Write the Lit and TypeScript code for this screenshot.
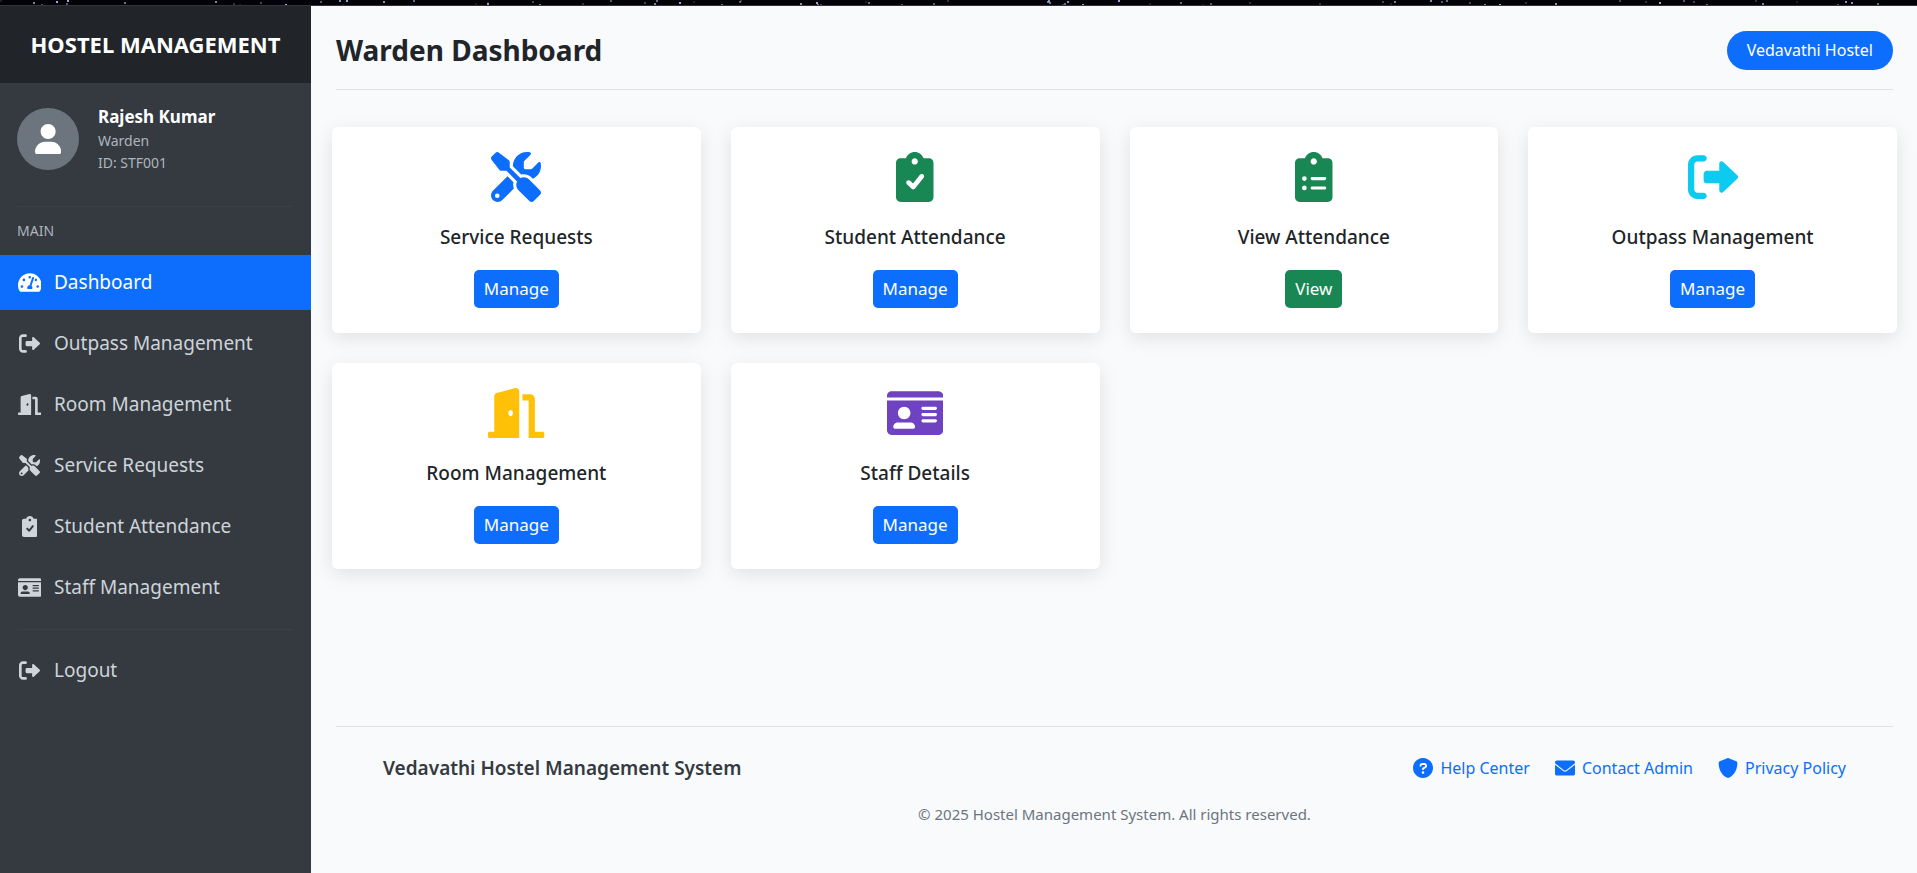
import { LitElement, html, css, svg } from "lit";
import { customElement, property } from "lit/decorators.js";

type Icon = { w: number; d: string };

const BOARD =
  "M336 64h-53.9C268.9 26.8 233.7 0 192 0S115.1 26.8 101.9 64H48C21.5 64 0 85.5 0 112v352c0 26.5 21.5 48 48 48h288c26.5 0 48-21.5 48-48V112C384 85.5 362.5 64 336 64zM192 64c17.7 0 32 14.3 32 32s-14.3 32-32 32s-32-14.3-32-32S174.3 64 192 64z";

const ICONS: Record<string, Icon> = {
  tools: {
    w: 512,
    d: "M78.6 5C69.1-2.4 55.6-1.5 47 7L7 47c-8.5 8.5-9.4 22-2.1 31.6l80 104c4.5 5.9 11.6 9.4 19 9.4h54.1l109 109c-14.7 29-10 65.4 14.3 89.6l112 112c12.5 12.5 32.8 12.5 45.3 0l64-64c12.5-12.5 12.5-32.8 0-45.3l-112-112c-24.2-24.2-60.6-29-89.6-14.3l-109-109V104c0-7.5-3.5-14.5-9.4-19L78.6 5zM19.9 396.1C7.2 408.8 0 426.1 0 444.1C0 481.6 30.4 512 67.9 512c18 0 35.3-7.2 48-19.9L233.7 374.3c-7.8-20.9-9-43.6-3.6-65.1l-61.7-61.7L19.9 396.1zM512 144c0-10.5-1.1-20.7-3.2-30.5c-2.4-11.2-16.1-14.1-24.2-6l-63.9 63.9c-3 3-7.1 4.7-11.3 4.7H352c-8.8 0-16-7.2-16-16V102.6c0-4.2 1.7-8.3 4.7-11.3l63.9-63.9c8.1-8.1 5.2-21.8-6-24.2C388.7 1.1 378.5 0 368 0C288.5 0 224 64.5 224 144l0 .8 85.3 85.3c36-9.1 75.8 .5 104 28.7L429 274.5c49-23 83-72.8 83-130.5zM40 448a24 24 0 1 1 48 0 24 24 0 1 1 -48 0z",
  },
  check: {
    w: 384,
    d:
      BOARD +
      "M282.9 262.8l-88 112c-4.1 5.2-10.2 8.8-16.9 9.1c-6.9 .2-13.4-2.3-18-6.9l-48-48c-9.4-9.4-9.4-24.6 0-33.9s24.6-9.4 33.9 0l28.7 28.7l70.6-90.2c8.2-10.4 23.3-12.2 33.7-4C289.3 237.3 291.1 252.3 282.9 262.8z",
  },
  list: {
    w: 384,
    d:
      BOARD +
      "M72 272a24 24 0 1 1 48 0a24 24 0 1 1-48 0zM72 368a24 24 0 1 1 48 0a24 24 0 1 1-48 0zM176 256h128c8.8 0 16 7.2 16 16s-7.2 16-16 16H176c-8.8 0-16-7.2-16-16s7.2-16 16-16zM176 352h128c8.8 0 16 7.2 16 16s-7.2 16-16 16H176c-8.8 0-16-7.2-16-16s7.2-16 16-16z",
  },
  exit: {
    w: 512,
    d: "M96 480h64c17.7 0 32-14.3 32-32s-14.3-32-32-32H96c-17.7 0-32-14.3-32-32V128c0-17.7 14.3-32 32-32h64c17.7 0 32-14.3 32-32s-14.3-32-32-32H96C43 32 0 75 0 128v256C0 437 43 480 96 480zM504.8 238.5l-144.1-136c-7-6.6-17.2-8.4-26-4.6c-8.8 3.8-14.5 12.5-14.5 22.1l-.1 72h-128c-17.7 0-32 14.3-32 32v64c0 17.7 14.3 32 32 32h128l.1 72c0 9.6 5.7 18.3 14.5 22.1c8.8 3.8 19 2 26-4.6l144.1-136C514.4 264.4 514.4 247.6 504.8 238.5z",
  },
  door: {
    w: 576,
    d: "M560 448H480V113.5c0-27.3-21.5-49.5-48-49.5H352v64h64V512h144c8.9 0 16-7.1 16-16v-32C576 455.1 568.9 448 560 448zM280.3 1l-192 49.8C73.1 54.5 64 67.8 64 82.9V448H16c-8.9 0-16 7.1-16 16v32c0 8.9 7.1 16 16 16H320V33.1C320 11.6 300.5-4.2 280.3 1zM232 288c-13.3 0-24-14.4-24-32s10.7-32 24-32s24 14.4 24 32S245.3 288 232 288z",
  },
  card: {
    w: 576,
    d: "M528 32H48C21.5 32 0 53.5 0 80V96h576V80C576 53.5 554.5 32 528 32zM0 432c0 26.5 21.5 48 48 48h480c26.5 0 48-21.5 48-48V128H0V432zM368 192h128c8.8 0 16 7.2 16 16s-7.2 16-16 16H368c-8.8 0-16-7.2-16-16s7.2-16 16-16zM368 256h128c8.8 0 16 7.2 16 16s-7.2 16-16 16H368c-8.8 0-16-7.2-16-16s7.2-16 16-16zM368 320h128c8.8 0 16 7.2 16 16s-7.2 16-16 16H368c-8.8 0-16-7.2-16-16s7.2-16 16-16zM176 192c35.4 0 64 28.7 64 64s-28.6 64-64 64s-64-28.7-64-64S140.7 192 176 192zM112 352h128c26.5 0 48 21.5 48 48c0 8.8-7.2 16-16 16H80c-8.8 0-16-7.2-16-16C64 373.5 85.5 352 112 352z",
  },
  gauge: {
    w: 576,
    d: "M288 32C128.94 32 0 160.94 0 320c0 52.8 14.25 102.26 39.06 144.8 5.61 9.62 16.3 15.2 27.44 15.2h443c11.14 0 21.83-5.58 27.44-15.2C561.75 422.26 576 372.8 576 320c0-159.06-128.94-288-288-288zm0 64c14.71 0 26.58 10.13 30.32 23.65-1.11 2.26-2.64 4.23-3.45 6.67l-9.22 27.67c-5.13 3.49-10.97 6.01-17.64 6.01-17.67 0-32-14.33-32-32S270.33 96 288 96zM96 384c-17.67 0-32-14.33-32-32s14.33-32 32-32 32 14.33 32 32-14.33 32-32 32zm48-160c-17.67 0-32-14.33-32-32s14.33-32 32-32 32 14.33 32 32-14.33 32-32 32zm246.77-72.41l-61.33 184C343.13 347.33 352 364.54 352 384c0 11.72-3.38 22.55-8.88 32H232.88c-5.5-9.45-8.88-20.28-8.88-32 0-33.94 26.5-61.43 59.9-63.59l61.34-184.01c4.17-12.56 17.73-19.45 30.36-15.17 12.57 4.19 19.35 17.79 15.17 30.36zm14.66 57.2l15.52-46.55c3.47-1.29 7.13-2.23 11.05-2.23 17.67 0 32 14.33 32 32s-14.33 32-32 32c-11.38-.01-20.89-6.28-26.57-15.22zM480 384c-17.67 0-32-14.33-32-32s14.33-32 32-32 32 14.33 32 32-14.33 32-32 32z",
  },
  user: {
    w: 448,
    d: "M224 256c70.7 0 128-57.3 128-128S294.7 0 224 0S96 57.3 96 128s57.3 128 128 128zm50.7 48H173.3C77.6 304 0 381.6 0 477.3C0 496.5 15.5 512 34.7 512h378.6c19.1 0 34.7-15.5 34.7-34.7C448 381.6 370.4 304 274.7 304z",
  },
  help: {
    w: 512,
    d: "M256 0C114.6 0 0 114.6 0 256s114.6 256 256 256s256-114.6 256-256S397.4 0 256 0zM256 400c-18 0-32-14-32-32s13.1-32 32-32c17.1 0 32 14 32 32S273.1 400 256 400zM325.1 258L280 286V288c0 13-11 24-24 24S232 301 232 288V272c0-8 4-16 12-21l57-34C308 213 312 206 312 198C312 186 301.1 176 289.1 176h-51.1C225.1 176 216 186 216 198c0 13-11 24-24 24s-24-11-24-24C168 159 199 128 237.1 128h51.1C329 128 360 159 360 198C360 222 347 245 325.1 258z",
  },
  mail: {
    w: 512,
    d: "M256 352c-16.5 0-33.1-5.4-47.2-16.4L0 173.2V400C0 426.5 21.5 448 48 448h416c26.5 0 48-21.5 48-48V173.2L303.2 335.6C289.1 346.6 272.5 352 256 352zM16.3 145.3l212.2 165.1c16.2 12.6 38.9 12.6 55.1 0l212.2-165.1C505.1 137.3 512 125 512 112C512 85.5 490.5 64 464 64H48C21.5 64 0 85.5 0 112C0 125 6 137.3 16.3 145.3z",
  },
  shield: {
    w: 512,
    d: "M466.5 83.7l-192-80c-11.8-4.9-25.1-4.9-36.9 0l-192 80C27.7 91.1 16 108.6 16 128c0 198.5 114.5 335.7 221.5 380.3 11.8 4.9 25.1 4.9 36.9 0C360.1 472.6 496 349.3 496 128c0-19.4-11.7-36.9-29.5-44.3z",
  },
};

@customElement("hm-icon")
class HmIcon extends LitElement {
  @property() name = "user";

  static styles = css`
    :host {
      display: inline-flex;
      justify-content: center;
    }
    .glyph {
      display: block;
      height: 1em;
      width: auto;
      fill: currentColor;
      fill-rule: evenodd;
    }
  `;

  render() {
    const icon = ICONS[this.name];
    return html`<svg class="glyph" viewBox="0 0 ${icon.w} 512" aria-hidden="true">
      ${svg`<path d=${icon.d}></path>`}
    </svg>`;
  }
}

const STARS = Array.from({ length: 80 }, (_, i) => ({
  x: (i * 617 + ((i * i * 37) % 211)) % 1917,
  y: (i * 7 + (i % 3)) % 5,
  o: 0.15 + ((i * 13) % 8) / 10,
}));

@customElement("hm-starfield")
class HmStarfield extends LitElement {
  static styles = css`
    :host {
      display: block;
      height: 5px;
      overflow: hidden;
      background: #030208;
      border-bottom: 1px solid #3a3138;
    }
    .sky {
      display: block;
      width: 100%;
      height: 5px;
      fill: #b9c6ee;
    }
  `;

  render() {
    return html`<svg class="sky" viewBox="0 0 1917 5" preserveAspectRatio="none" aria-hidden="true">
      ${STARS.map(
        (s) => svg`<rect x=${s.x} y=${s.y} width="2" height="2" opacity=${s.o}></rect>`,
      )}
    </svg>`;
  }
}

const NAV = [
  { icon: "gauge", label: "Dashboard", active: true },
  { icon: "exit", label: "Outpass Management" },
  { icon: "door", label: "Room Management" },
  { icon: "tools", label: "Service Requests" },
  { icon: "check", label: "Student Attendance" },
  { icon: "card", label: "Staff Management" },
];

@customElement("hm-sidebar")
class HmSidebar extends LitElement {
  static styles = css`
    :host {
      display: block;
      width: 311px;
      flex: none;
      background: #343a40;
      color: #ced4da;
    }
    .brand {
      padding: 26px 16px;
      background: #212529;
      color: #fff;
      font-size: 22px;
      line-height: 25px;
      font-weight: 700;
      text-align: center;
      white-space: nowrap;
    }
    .profile {
      display: flex;
      align-items: center;
      gap: 19px;
      padding: 20px 17px 32px;
    }
    .avatar {
      display: flex;
      align-items: center;
      justify-content: center;
      width: 62px;
      height: 62px;
      border-radius: 50%;
      background: #6c757d;
      color: #fff;
      font-size: 30px;
    }
    .name {
      color: #fff;
      font-size: 17px;
      line-height: 27px;
      font-weight: 700;
    }
    .meta {
      color: #adb5bd;
      font-size: 14px;
      line-height: 22px;
    }
    .rule {
      height: 1px;
      margin: 0 19px 0 17px;
      border: 0;
      background: #3b4148;
    }
    .section {
      margin: 0;
      padding: 13px 17px;
      color: #adb5bd;
      font-size: 14px;
      line-height: 22px;
      font-weight: 400;
    }
    .list {
      display: flex;
      flex-direction: column;
      gap: 6px;
      margin: 0;
      padding: 0;
      list-style: none;
    }
    .link {
      display: flex;
      align-items: center;
      gap: 12px;
      height: 55px;
      padding: 0 17px;
      color: inherit;
      font-size: 19px;
      text-decoration: none;
    }
    .link.active {
      background: #0d6efd;
      color: #fff;
    }
    .icon {
      width: 25px;
      font-size: 21px;
    }
    .last {
      margin: 14px 0 13px;
    }
    .last .rule {
      margin-bottom: 13px;
    }
  `;

  render() {
    return html`
      <div class="brand">HOSTEL MANAGEMENT</div>
      <div class="profile">
        <div class="avatar"><hm-icon name="user"></hm-icon></div>
        <div>
          <div class="name">Rajesh Kumar</div>
          <div class="meta">Warden</div>
          <div class="meta">ID: STF001</div>
        </div>
      </div>
      <hr class="rule" />
      <h2 class="section">MAIN</h2>
      <nav>
        <ul class="list">
          ${NAV.map(
            (n) => html`<li>
              <a class="link ${n.active ? "active" : ""}" href="#"
                ><hm-icon class="icon" name=${n.icon}></hm-icon><span>${n.label}</span></a
              >
            </li>`,
          )}
        </ul>
        <div class="last">
          <hr class="rule" />
          <a class="link" href="#"><hm-icon class="icon" name="exit"></hm-icon><span>Logout</span></a>
        </div>
      </nav>
    `;
  }
}

const CARDS = [
  { icon: "tools", tone: "blue", title: "Service Requests", action: "Manage" },
  { icon: "check", tone: "green", title: "Student Attendance", action: "Manage" },
  { icon: "list", tone: "green", title: "View Attendance", action: "View" },
  { icon: "exit", tone: "cyan", title: "Outpass Management", action: "Manage" },
  { icon: "door", tone: "amber", title: "Room Management", action: "Manage" },
  { icon: "card", tone: "purple", title: "Staff Details", action: "Manage" },
];

const LINKS = [
  { icon: "help", label: "Help Center" },
  { icon: "mail", label: "Contact Admin" },
  { icon: "shield", label: "Privacy Policy" },
];

@customElement("app-root")
class AppRoot extends LitElement {
  static styles = css`
    :host {
      display: flex;
      flex-direction: column;
      min-height: 100vh;
      background: #f8fafc;
      color: #212529;
      font-family: "Segoe UI", "Noto Sans", "Open Sans", sans-serif;
      font-size: 17px;
      line-height: 1.5;
    }
    .shell {
      display: flex;
      flex: 1;
    }
    .main {
      display: flex;
      flex-direction: column;
      flex: 1;
      min-width: 0;
      padding: 0 24px 0 25px;
    }
    .header {
      display: flex;
      align-items: center;
      justify-content: space-between;
      padding: 25px 0 19px;
      border-bottom: 1px solid #dee2e6;
    }
    .title {
      margin: 0;
      font-size: 28px;
      line-height: 39px;
      font-weight: 700;
    }
    .hostel {
      padding: 0 20px;
      border-radius: 20px;
      background: #0d6efd;
      color: #fff;
      font-size: 16px;
      line-height: 39px;
    }
    .grid {
      display: grid;
      grid-template-columns: repeat(4, 1fr);
      gap: 30px;
      margin: 37px -4px 0;
    }
    .card {
      display: flex;
      flex-direction: column;
      align-items: center;
      padding: 25px;
      border-radius: 6px;
      background: #fff;
      box-shadow: 0 5px 19px rgba(0, 0, 0, 0.1);
    }
    .symbol {
      font-size: 50px;
    }
    .blue {
      color: #0d6efd;
    }
    .green {
      color: #198754;
    }
    .cyan {
      color: #0dcaf0;
    }
    .amber {
      color: #ffc107;
    }
    .purple {
      color: #6f42c1;
    }
    .label {
      margin: 23px 0 21px;
      font-size: 19px;
      line-height: 24px;
      font-weight: 500;
    }
    .button {
      height: 38px;
      padding: 0 10px;
      border: 0;
      border-radius: 5px;
      background: #0d6efd;
      color: #fff;
      font: inherit;
    }
    .button.view {
      background: #198754;
    }
    .footer {
      margin-top: auto;
      padding: 25px 47px 47px;
      border-top: 1px solid #dee2e6;
    }
    .row {
      display: flex;
      align-items: center;
      justify-content: space-between;
    }
    .system {
      color: #343a40;
      font-size: 19px;
      line-height: 32px;
      font-weight: 600;
    }
    .links {
      display: flex;
      gap: 25px;
    }
    .help {
      display: flex;
      align-items: center;
      gap: 7px;
      color: #0d6efd;
      font-size: 16px;
      text-decoration: none;
    }
    .mark {
      font-size: 20px;
    }
    .copy {
      margin: 18px 0 0;
      color: #6c757d;
      font-size: 15px;
      line-height: 24px;
      text-align: center;
    }
  `;

  render() {
    return html`
      <hm-starfield></hm-starfield>
      <div class="shell">
        <hm-sidebar></hm-sidebar>
        <main class="main">
          <header class="header">
            <h1 class="title">Warden Dashboard</h1>
            <span class="hostel">Vedavathi Hostel</span>
          </header>
          <section class="grid">
            ${CARDS.map(
              (c) => html`<article class="card">
                <hm-icon class="symbol ${c.tone}" name=${c.icon}></hm-icon>
                <h2 class="label">${c.title}</h2>
                <button class="button ${c.action === "View" ? "view" : ""}" type="button">
                  ${c.action}
                </button>
              </article>`,
            )}
          </section>
          <footer class="footer">
            <div class="row">
              <div class="system">Vedavathi Hostel Management System</div>
              <div class="links">
                ${LINKS.map(
                  (l) => html`<a class="help" href="#"
                    ><hm-icon class="mark" name=${l.icon}></hm-icon><span>${l.label}</span></a
                  >`,
                )}
              </div>
            </div>
            <p class="copy">© 2025 Hostel Management System. All rights reserved.</p>
          </footer>
        </main>
      </div>
    `;
  }
}
